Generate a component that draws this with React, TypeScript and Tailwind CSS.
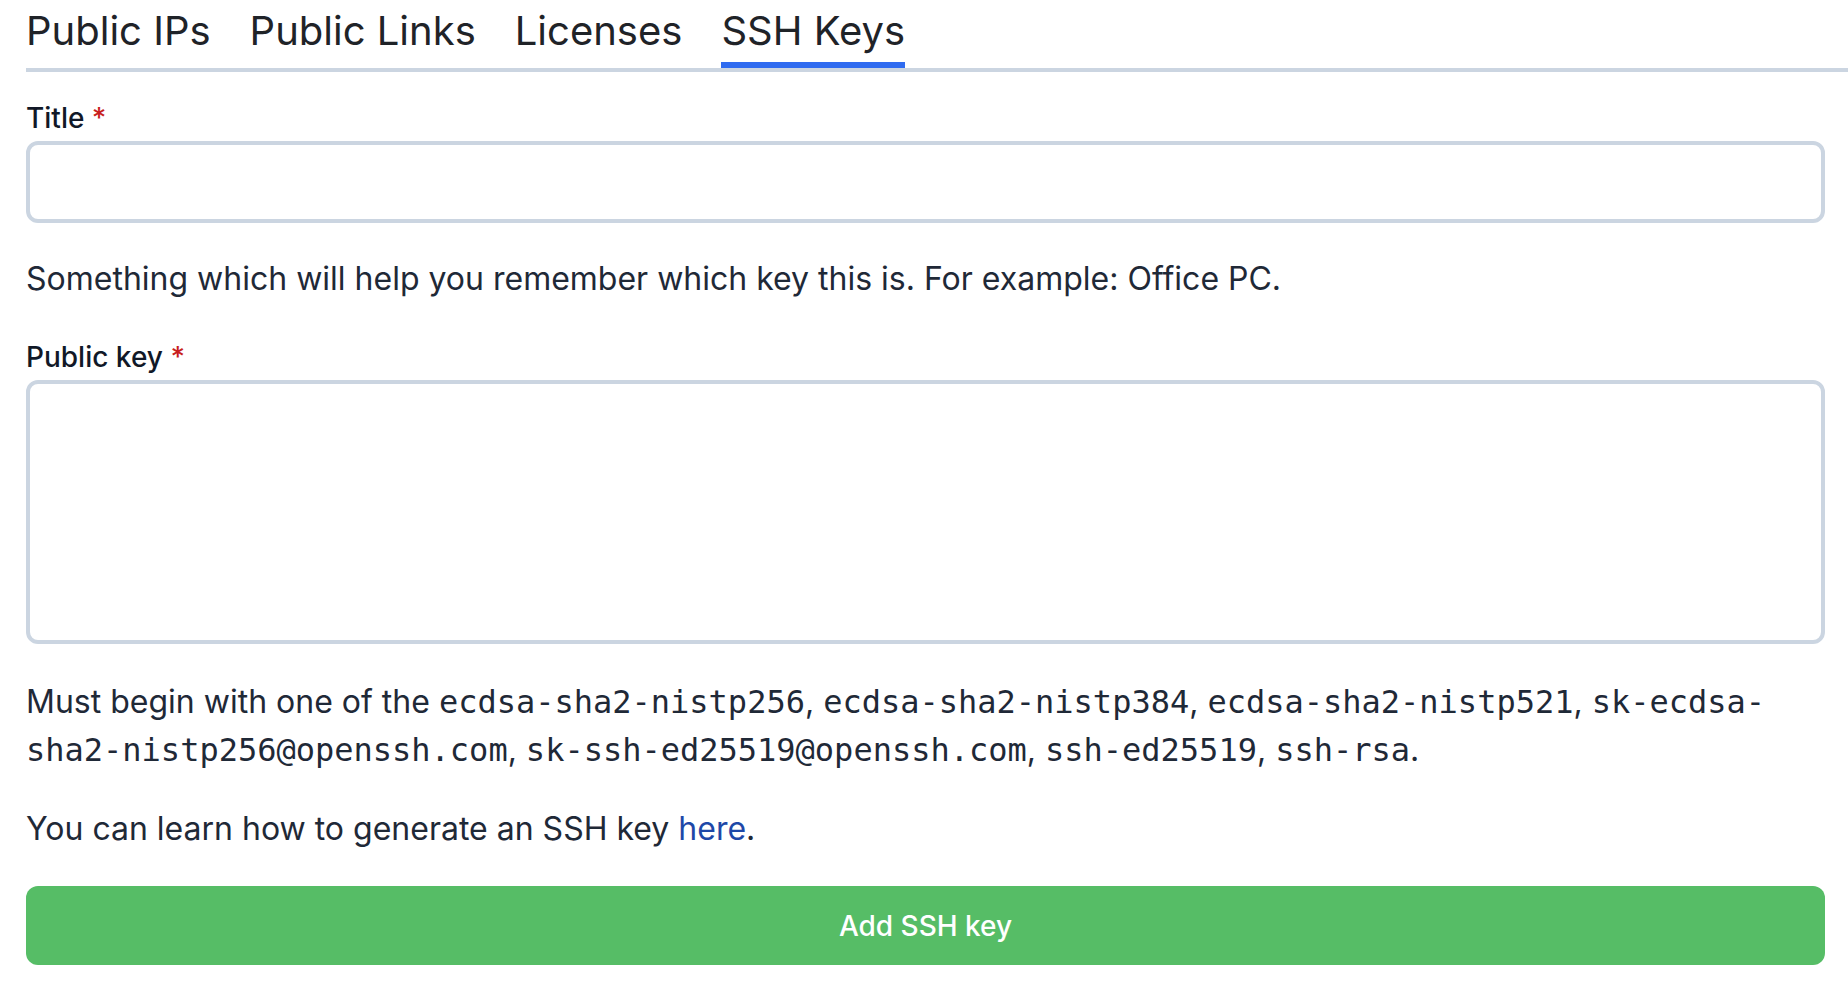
import React, { useState } from 'react';

const tabs = ['Public IPs', 'Public Links', 'Licenses', 'SSH Keys'];

const keyTypes = [
  'ecdsa-sha2-nistp256',
  'ecdsa-sha2-nistp384',
  'ecdsa-sha2-nistp521',
  'sk-ecdsa-sha2-nistp256@openssh.com',
  'sk-ssh-ed25519@openssh.com',
  'ssh-ed25519',
  'ssh-rsa',
];

export default function App() {
  const [active, setActive] = useState('SSH Keys');
  const [title, setTitle] = useState('');
  const [publicKey, setPublicKey] = useState('');

  return (
    <div className="min-h-screen bg-white pl-[26px] text-[#1f2937] font-['Inter','Liberation_Sans',sans-serif]">
      <div className="flex gap-[39px] border-b-4 border-[#cbd5e1] pt-[7px]">
        {tabs.map((tab) => (
          <button
            key={tab}
            type="button"
            onClick={() => setActive(tab)}
            className={
              active === tab
                ? 'border-b-[6px] border-[#2f6bf0] pb-[7px] text-[40px] leading-[48px] text-[#1f2328]'
                : 'border-b-[6px] border-transparent pb-[7px] text-[40px] leading-[48px] text-[#1f2328]'
            }
          >
            {tab}
          </button>
        ))}
      </div>

      <form onSubmit={(e) => e.preventDefault()} className="pr-[23px] pt-[26px]">
        <label htmlFor="title" className="block text-[28px] leading-[40px] font-medium text-[#111827]">
          Title <span className="text-[#c81e1e]">*</span>
        </label>
        <input
          id="title"
          type="text"
          value={title}
          onChange={(e) => setTitle(e.target.value)}
          className="mt-[3px] block h-[82px] w-full rounded-[12px] border-4 border-[#cbd5e1] bg-white px-4 text-[32px] outline-none"
        />
        <p className="mt-[32px] text-[32px] leading-[48px]">
          Something which will help you remember which key this is. For example: Office PC.
        </p>

        <label htmlFor="public-key" className="mt-[34px] block text-[28px] leading-[40px] font-medium text-[#111827]">
          Public key <span className="text-[#c81e1e]">*</span>
        </label>
        <textarea
          id="public-key"
          value={publicKey}
          onChange={(e) => setPublicKey(e.target.value)}
          className="mt-[3px] block h-[264px] w-full resize-none rounded-[12px] border-4 border-[#cbd5e1] bg-white p-4 text-[32px] outline-none"
        />

        <p className="mt-[34px] text-[32px] leading-[48px]">
          Must begin with one of the{' '}
          {keyTypes.map((k, i) => (
            <React.Fragment key={k}>
              <code className="font-['DejaVu_Sans_Mono',monospace] text-[32px]">{k}</code>
              {i < keyTypes.length - 1 ? ', ' : '.'}
            </React.Fragment>
          ))}
        </p>

        <p className="mt-[31px] text-[32px] leading-[48px]">
          You can learn how to generate an SSH key{' '}
          <a href="#" className="text-[#1e48a8]">
            here
          </a>
          .
        </p>

        <button
          type="submit"
          className="mt-[33px] h-[79px] w-full rounded-[12px] bg-[#56bd66] text-[28px] font-medium text-white"
        >
          Add SSH key
        </button>
      </form>
    </div>
  );
}
